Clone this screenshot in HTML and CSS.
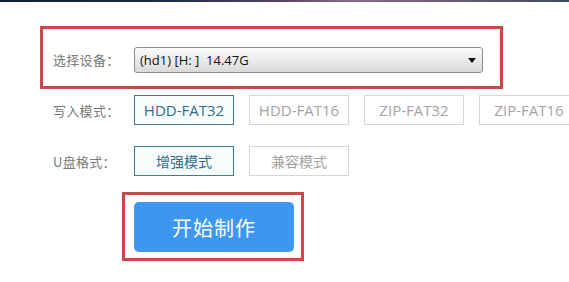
FILE: index.html
```html
<!DOCTYPE html>
<html lang="zh-CN">
<head>
<meta charset="utf-8">
<title>U盘制作</title>
<link rel="stylesheet" href="styles.css">
</head>
<body>
<div class="topbar"></div>
<div class="main">
  <div class="device-box">
    <span class="label">选择设备：</span>
    <div class="select">
      <span class="select-text">(hd1) [H: ]&nbsp; 14.47G</span>
      <svg class="arrow" width="8" height="5" viewBox="0 0 8 5"><path d="M0 0 L8 0 L4 5 Z" fill="#111"/></svg>
    </div>
  </div>
  <div class="row row-mode">
    <span class="label">写入模式：</span>
    <div class="opts">
      <span class="opt active">HDD-FAT32</span>
      <span class="opt">HDD-FAT16</span>
      <span class="opt">ZIP-FAT32</span>
      <span class="opt">ZIP-FAT16</span>
    </div>
  </div>
  <div class="row row-format">
    <span class="label">U盘格式：</span>
    <div class="opts">
      <span class="opt active cn">增强模式</span>
      <span class="opt cn">兼容模式</span>
    </div>
  </div>
  <div class="start-box">
    <button class="start">开始制作</button>
  </div>
</div>
</body>
</html>
```
FILE: styles.css
```css
html, body {
  margin: 0;
  padding: 0;
  background: #ffffff;
  overflow: hidden;
}
body {
  width: 569px;
  height: 282px;
  font-family: "Open Sans", "Noto Sans CJK SC", sans-serif;
}
.topbar {
  height: 2px;
  background: linear-gradient(90deg, #0c1f3f 0%, #1c2c50 30%, #5a4468 50%, #8a6a88 62%, #6a5a78 80%, #3c4a62 100%);
}
.main {
  padding: 24px 0 0 40px;
}
.device-box {
  width: 447px;
  height: 57px;
  border: 3px solid #c9484b;
  display: flex;
  align-items: center;
  padding: 0 0 0 10px;
}
.label {
  width: 81px;
  flex: none;
  font-family: "Noto Sans CJK SC", sans-serif;
  font-size: 13px;
  color: #7a7a7a;
  letter-spacing: 0.3px;
}
.device-box .label {
  margin-top: 4px;
}
.select {
  width: 336px;
  height: 24px;
  margin-top: 5px;
  border: 1px solid #8c8c8c;
  border-radius: 3px;
  background: linear-gradient(180deg, #fbfbfb 0%, #ececec 50%, #d9d9d9 100%);
  display: flex;
  align-items: center;
  justify-content: space-between;
  padding: 0 6px 0 5px;
}
.select-text {
  font-size: 13px;
  color: #111;
}
.arrow {
  display: block;
}
.row {
  display: flex;
  align-items: center;
  padding-left: 13px;
}
.row-mode {
  margin-top: 6px;
}
.row-format {
  margin-top: 21px;
}
.opts {
  display: flex;
  gap: 15px;
}
.opt {
  width: 98px;
  height: 28px;
  border: 1px solid #d6d6d6;
  display: flex;
  align-items: center;
  justify-content: center;
  font-size: 15px;
  color: #a3a3a3;
  flex: none;
}
.opt.cn {
  font-family: "Noto Sans CJK SC", sans-serif;
  font-size: 14px;
}
.opt.active {
  border-color: #3d7e93;
  color: #2f6f8c;
  background: #f7fcfd;
}
.start-box {
  margin: 16px 0 0 82px;
  width: 182px;
  height: 69px;
  border: 3px solid #c9484b;
  padding: 7px 0 0 9px;
  box-sizing: border-box;
}
.start {
  width: 160px;
  height: 50px;
  border: none;
  border-radius: 5px;
  background: #3d97f1;
  color: #ffffff;
  font-family: "Noto Sans CJK SC", sans-serif;
  font-size: 20px;
  padding: 0;
  letter-spacing: 1px;
}
```
